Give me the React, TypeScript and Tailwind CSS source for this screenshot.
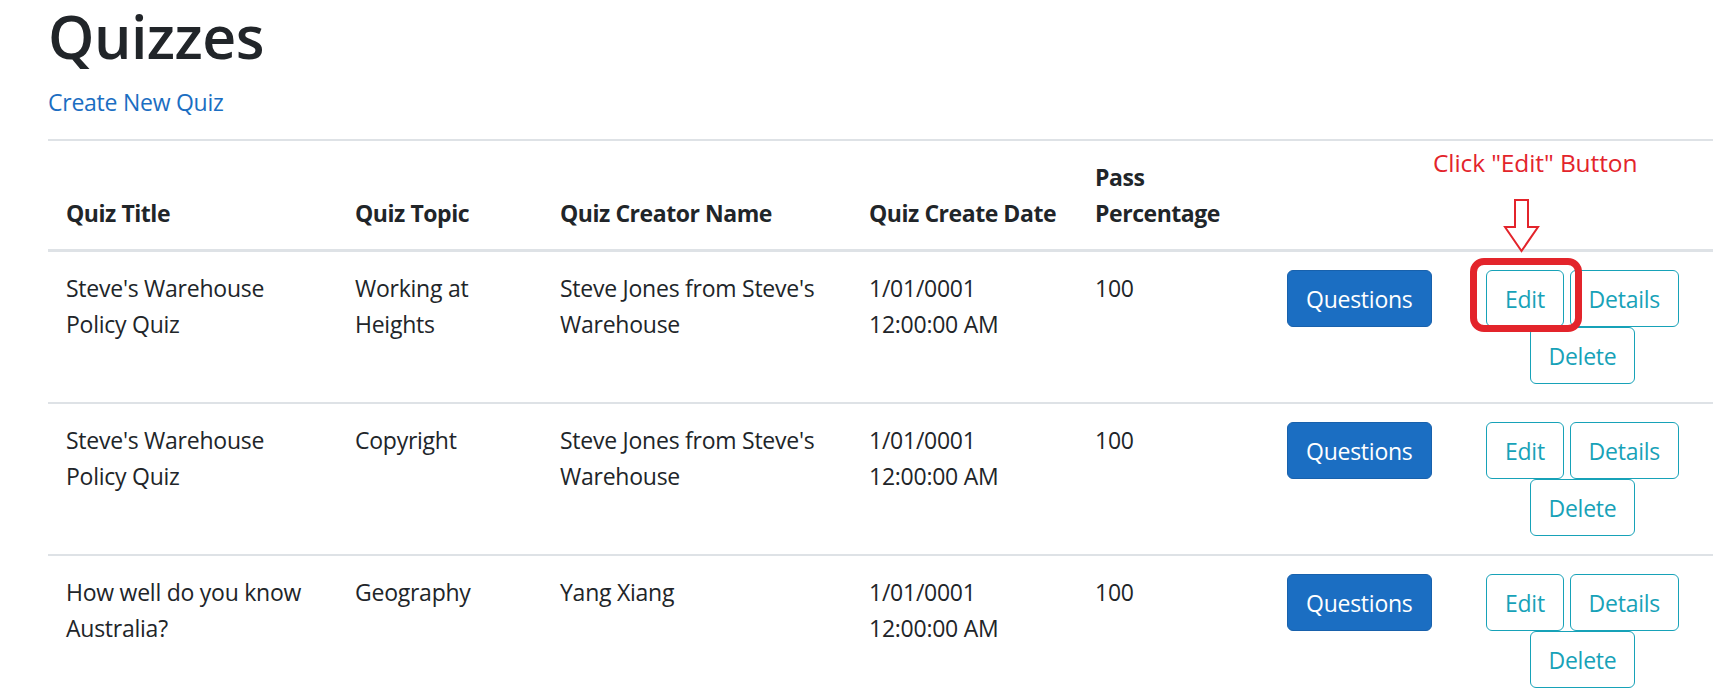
import React from "react";

const rows = [
  {
    title: "Steve's Warehouse Policy Quiz",
    topic: "Working at Heights",
    creator: "Steve Jones from Steve's Warehouse",
  },
  {
    title: "Steve's Warehouse Policy Quiz",
    topic: "Copyright",
    creator: "Steve Jones from Steve's Warehouse",
  },
  {
    title: "How well do you know Australia?",
    topic: "Geography",
    creator: "Yang Xiang",
  },
];

function OutlineBtn({ label }: { label: string }) {
  return (
    <a className="inline-block align-middle border border-[#17a2b8] text-[#17a2b8] rounded-[6px] px-[18px] py-[9.5px] leading-[36px] cursor-pointer">
      {label}
    </a>
  );
}

export default function App() {
  return (
    <div
      className="relative bg-white text-[#212529] text-[23px] tracking-[-0.25px] leading-[36px] min-h-[699px] overflow-hidden"
      style={{ fontFamily: '"Open Sans", "Noto Sans", sans-serif' }}
    >
      <div className="pl-[48px]">
        <h1 className="text-[59px] leading-[72px] font-semibold tracking-[-0.5px] mb-[12px]">Quizzes</h1>
        <p className="mb-[19px]">
          <a className="text-[#1b6ec2] cursor-pointer">Create New Quiz</a>
        </p>
        <table className="border-collapse table-fixed w-[1665px] text-left">
          <colgroup>
            <col className="w-[289px]" />
            <col className="w-[205px]" />
            <col className="w-[309px]" />
            <col className="w-[226px]" />
            <col className="w-[192px]" />
            <col className="w-[183px]" />
            <col className="w-[261px]" />
          </colgroup>
          <thead>
            <tr className="border-t-2 border-b-[3px] border-[#dee2e6]">
              <th className="p-[18px] align-bottom font-bold tracking-[-0.45px]">Quiz Title</th>
              <th className="p-[18px] align-bottom font-bold tracking-[-0.45px]">Quiz Topic</th>
              <th className="p-[18px] align-bottom font-bold tracking-[-0.45px]">Quiz Creator Name</th>
              <th className="p-[18px] align-bottom font-bold tracking-[-0.45px]">Quiz Create Date</th>
              <th className="p-[18px] align-bottom font-bold tracking-[-0.45px]">Pass Percentage</th>
              <th className="p-[18px] align-bottom"></th>
              <th className="p-[18px] align-bottom"></th>
            </tr>
          </thead>
          <tbody>
            {rows.map((r, i) => (
              <tr key={i} className="border-t-2 border-[#dee2e6]">
                <td className="p-[18px] align-top">{r.title}</td>
                <td className="p-[18px] align-top">{r.topic}</td>
                <td className="p-[18px] align-top">{r.creator}</td>
                <td className="p-[18px] align-top">
                  1/01/0001
                  <br />
                  12:00:00 AM
                </td>
                <td className="p-[18px] align-top">100</td>
                <td className="p-[18px] align-top">
                  <a className="inline-block bg-[#1b6ec2] border border-[#1861ac] text-white rounded-[6px] px-[18px] py-[9.5px] leading-[36px] cursor-pointer">
                    Questions
                  </a>
                </td>
                <td className="p-[18px] align-top text-center">
                  <OutlineBtn label="Edit" />{" "}
                  <OutlineBtn label="Details" />{" "}
                  <OutlineBtn label="Delete" />
                </td>
              </tr>
            ))}
          </tbody>
        </table>
      </div>

      {/* annotation overlay */}
      <div className="absolute left-[1433px] top-[146px] text-[24.5px] leading-[34px] tracking-[-0.1px] text-[#e3242b] whitespace-nowrap">
        Click "Edit" Button
      </div>
      <svg
        className="absolute left-[1500px] top-[196px]"
        width="44"
        height="60"
        viewBox="0 0 44 60"
      >
        <polygon
          points="15,4 28,4 28,31 38,31 21.5,55 5,31 15,31"
          fill="none"
          stroke="#e3242b"
          strokeWidth="2"
          strokeLinejoin="miter"
        />
      </svg>
      <div className="absolute left-[1470px] top-[258px] w-[112px] h-[74px] border-[7px] border-[#e3242b] rounded-[14px]" />
    </div>
  );
}
